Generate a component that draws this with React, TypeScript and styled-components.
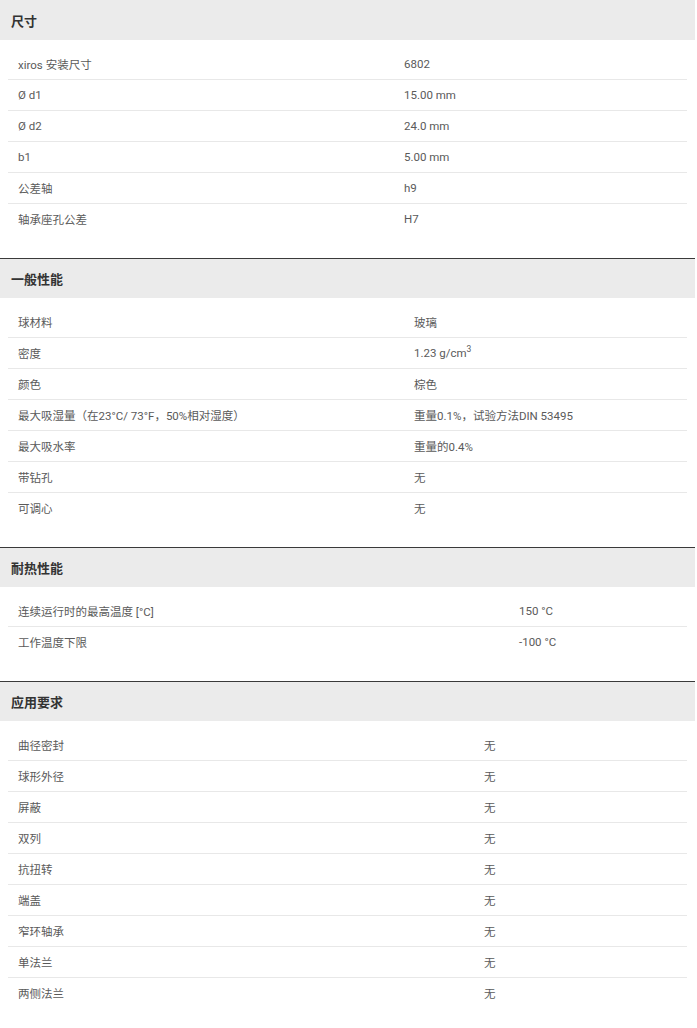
import React from "react";
import styled, { createGlobalStyle } from "styled-components";

const GlobalStyle = createGlobalStyle`
  body {
    margin: 0;
    background: #fff;
    font-family: Roboto, "Noto Sans CJK SC", sans-serif;
  }
`;

const Page = styled.div`
  width: 695px;
`;

const Section = styled.section<{ $first?: boolean }>`
  border-top: ${(p) => (p.$first ? "none" : "1px solid #3a3a3a")};
`;

const SectionHeader = styled.h2<{ $first?: boolean }>`
  margin: 0;
  height: ${(p) => (p.$first ? "40px" : "39px")};
  display: flex;
  align-items: center;
  padding: 0 11px;
  background: #ebebeb;
  color: #333;
  font-size: 13px;
  font-weight: 700;
`;

const Table = styled.div`
  padding: 9px 8px 23px;
`;

const Row = styled.div<{ $labelWidth: number }>`
  display: grid;
  grid-template-columns: ${(p) => p.$labelWidth}px 1fr;
  height: 31px;
  align-items: center;
  border-bottom: 1px solid #e8e8e8;
  box-sizing: border-box;
  &:last-child {
    border-bottom-color: transparent;
  }
`;

const Cell = styled.div`
  padding-left: 10px;
  font-size: 11.5px;
  color: #5a5a5a;
  white-space: nowrap;
  sup {
    font-size: 8.5px;
    line-height: 0;
  }
`;

type Spec = { label: React.ReactNode; value: React.ReactNode };

const sections: { title: string; labelWidth: number; rows: Spec[] }[] = [
  {
    title: "尺寸",
    labelWidth: 386,
    rows: [
      { label: "xiros 安装尺寸", value: "6802" },
      { label: "Ø d1", value: "15.00 mm" },
      { label: "Ø d2", value: "24.0 mm" },
      { label: "b1", value: "5.00 mm" },
      { label: "公差轴", value: "h9" },
      { label: "轴承座孔公差", value: "H7" },
    ],
  },
  {
    title: "一般性能",
    labelWidth: 396,
    rows: [
      { label: "球材料", value: "玻璃" },
      {
        label: "密度",
        value: (
          <>
            1.23 g/cm<sup>3</sup>
          </>
        ),
      },
      { label: "颜色", value: "棕色" },
      {
        label: "最大吸湿量（在23°C/ 73°F，50%相对湿度）",
        value: "重量0.1%，试验方法DIN 53495",
      },
      { label: "最大吸水率", value: "重量的0.4%" },
      { label: "带钻孔", value: "无" },
      { label: "可调心", value: "无" },
    ],
  },
  {
    title: "耐热性能",
    labelWidth: 501,
    rows: [
      { label: "连续运行时的最高温度 [°C]", value: "150 °C" },
      { label: "工作温度下限", value: "-100 °C" },
    ],
  },
  {
    title: "应用要求",
    labelWidth: 466,
    rows: [
      { label: "曲径密封", value: "无" },
      { label: "球形外径", value: "无" },
      { label: "屏蔽", value: "无" },
      { label: "双列", value: "无" },
      { label: "抗扭转", value: "无" },
      { label: "端盖", value: "无" },
      { label: "窄环轴承", value: "无" },
      { label: "单法兰", value: "无" },
      { label: "两侧法兰", value: "无" },
    ],
  },
];

const App: React.FC = () => {
  return (
    <Page>
      <GlobalStyle />
      {sections.map((s, i) => (
        <Section key={s.title} $first={i === 0}>
          <SectionHeader $first={i === 0}>{s.title}</SectionHeader>
          <Table>
            {s.rows.map((r, j) => (
              <Row key={j} $labelWidth={s.labelWidth}>
                <Cell>{r.label}</Cell>
                <Cell>{r.value}</Cell>
              </Row>
            ))}
          </Table>
        </Section>
      ))}
    </Page>
  );
};

export default App;
